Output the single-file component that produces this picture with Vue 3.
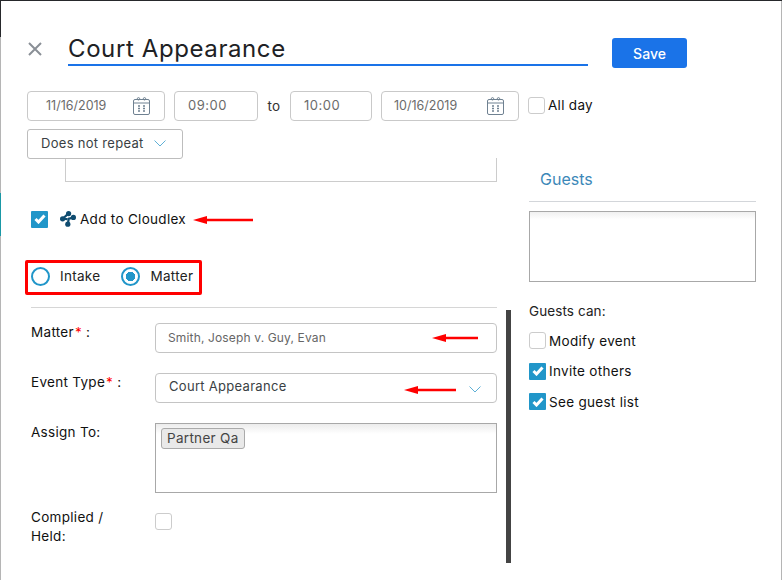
<template>
  <div class="modal">
    <span class="edge edge-left"></span>
    <span class="edge edge-dark"></span>
    <span class="edge edge-teal"></span>
    <span class="edge edge-right"></span>

    <header class="head">
      <button class="close" aria-label="Close">
        <svg width="14" height="14" viewBox="0 0 14 14"><path d="M1 1l12 12M13 1L1 13" stroke="#8a8f96" stroke-width="2" fill="none" /></svg>
      </button>
      <input class="title" type="text" v-model="title">
      <button class="save">Save</button>
    </header>

    <div class="when">
      <div class="field date">
        <span class="date-text">11/16/2019</span>
        <span class="cal">
          <svg width="17" height="18" viewBox="0 0 17 18" fill="none" stroke="#6f8191"><rect x="0.5" y="2.5" width="16" height="15" rx="1.5" /><path d="M1 6h15" /><circle cx="5.5" cy="1.8" r="1.2" /><circle cx="11.5" cy="1.8" r="1.2" /><path d="M5 9h2M10 9h2M5 11.5h2M10 11.5h2M5 14h2M10 14h2" stroke-width="1.4" /></svg>
        </span>
      </div>
      <div class="field time t1">09:00</div>
      <span class="to">to</span>
      <div class="field time t2">10:00</div>
      <div class="field date second">
        <span class="date-text">10/16/2019</span>
        <span class="cal">
          <svg width="17" height="18" viewBox="0 0 17 18" fill="none" stroke="#6f8191"><rect x="0.5" y="2.5" width="16" height="15" rx="1.5" /><path d="M1 6h15" /><circle cx="5.5" cy="1.8" r="1.2" /><circle cx="11.5" cy="1.8" r="1.2" /><path d="M5 9h2M10 9h2M5 11.5h2M10 11.5h2M5 14h2M10 14h2" stroke-width="1.4" /></svg>
        </span>
      </div>
      <label class="check allday"><span class="box"></span>All day</label>
    </div>

    <div class="repeat">
      <span>Does not repeat</span>
      <svg class="chev" width="12" height="7" viewBox="0 0 12 7"><path d="M0.5 0.5L6 6l5.5-5.5" stroke="#5fb0d6" fill="none" /></svg>
    </div>

    <div class="columns">
      <section class="left">
        <div class="desc"></div>

        <div class="cloudlex">
          <span class="box on"><svg width="12" height="10" viewBox="0 0 12 10"><path d="M1.5 5l3 3 6-6.5" stroke="#fff" stroke-width="3" fill="none" /></svg></span>
          <svg class="logo" width="16" height="16" viewBox="0 0 16 16" fill="#0f4c70">
            <circle cx="8.6" cy="2.6" r="2.6" />
            <circle cx="2.6" cy="7.8" r="2.6" />
            <circle cx="13.4" cy="6.4" r="2.6" />
            <circle cx="7.8" cy="13.2" r="2.6" />
            <path d="M8.6 2.4L2.8 7.6 7.4 8.2M13.4 6.6L8.8 7.6 7.8 13.2" stroke="#0f4c70" stroke-width="2.2" fill="none" />
          </svg>
          <span class="cloudlex-text">Add to Cloudlex</span>
          <svg class="arrow arrow-a" width="60" height="10" viewBox="0 0 60 10"><path d="M60 3.8H14V1L0 5l14 4V6.2h46z" fill="#f00" /></svg>
        </div>

        <div class="radios">
          <label class="radio"><span class="dot"></span>Intake</label>
          <label class="radio"><span class="dot on"></span>Matter</label>
        </div>

        <div class="rows">
          <div class="row">
            <span class="lbl">Matter<i>*</i> :</span>
            <div class="ctl input-like matter">Smith, Joseph v. Guy, Evan
              <svg class="arrow arrow-b" width="46" height="10" viewBox="0 0 46 10"><path d="M46 3.8H14V1L0 5l14 4V6.2h32z" fill="#f00" /></svg>
            </div>
          </div>
          <div class="row">
            <span class="lbl">Event Type<i>*</i> :</span>
            <div class="ctl input-like etype">Court Appearance
              <svg class="arrow arrow-c" width="52" height="10" viewBox="0 0 52 10"><path d="M52 3.8H14V1L0 5l14 4V6.2h38z" fill="#f00" /></svg>
              <svg class="chev" width="12" height="7" viewBox="0 0 12 7"><path d="M0.5 0.5L6 6l5.5-5.5" stroke="#5fb0d6" fill="none" /></svg>
            </div>
          </div>
          <div class="row">
            <span class="lbl">Assign To:</span>
            <div class="ctl assign"><span class="chip">Partner Qa</span></div>
          </div>
          <div class="row held">
            <span class="lbl">Complied /<br>Held:</span>
            <span class="box"></span>
          </div>
        </div>
      </section>

      <aside class="right">
        <h3 class="guests">Guests</h3>
        <div class="guest-box"></div>
        <p class="can">Guests can:</p>
        <label v-for="o in options" :key="o.text" class="check opt">
          <span class="box" :class="{ on: o.on }">
            <svg v-if="o.on" width="12" height="10" viewBox="0 0 12 10"><path d="M1.5 5l3 3 6-6.5" stroke="#fff" stroke-width="3" fill="none" /></svg>
          </span>
          {{ o.text }}
        </label>
      </aside>
    </div>

    <span class="scrollbar"></span>
  </div>
</template>

<script setup>
import { ref } from 'vue'

const title = ref('Court Appearance')
const options = [
  { text: 'Modify event', on: false },
  { text: 'Invite others', on: true },
  { text: 'See guest list', on: true },
]
</script>

<style>
html, body { margin: 0; background: #fff; }
</style>

<style scoped>
.modal {
  position: relative;
  width: 782px;
  height: 580px;
  box-sizing: border-box;
  overflow: hidden;
  padding: 37px 0 0 27px;
  background: #fff;
  border-top: 1px solid #26282b;
  font-family: Inter, "Noto Sans", sans-serif;
  font-size: 13.5px;
  letter-spacing: 0.3px;
  color: #111;
}
.edge { position: absolute; width: 1px; }
.edge-left { left: 0; top: 0; bottom: 0; background: #b5b5b5; }
.edge-dark { left: 0; top: 0; height: 36px; background: #26282b; }
.edge-teal { left: 0; top: 192px; height: 43px; background: #1a98a6; }
.edge-right { right: 0; top: 0; bottom: 0; background: #b5b5b5; }

.head { display: flex; align-items: flex-start; }
.close { display: flex; align-items: flex-start; width: 41px; height: 30px; padding: 4px 0 0 1px; border: 0; background: none; }
.title {
  width: 520px;
  height: 20px;
  box-sizing: content-box;
  padding: 0 0 6px;
  border: 0;
  border-bottom: 2px solid #1a73e8;
  outline: 0;
  font: 400 24px Inter, sans-serif;
  letter-spacing: 0.6px;
  color: #202124;
}
.save {
  width: 75px;
  height: 30px;
  margin-left: 24px;
  border: 0;
  border-radius: 3px;
  background: #1a73e8;
  color: #fff;
  font: 500 14px Inter, sans-serif;
}

.when { display: flex; align-items: center; height: 30px; margin-top: 23px; }
.field {
  height: 30px;
  box-sizing: border-box;
  border: 1px solid #c9c9c9;
  border-radius: 4px;
  color: #6b6b6b;
  line-height: 27px;
}
.date { width: 138px; display: flex; justify-content: space-between; }
.date-text { padding-left: 18px; font-size: 12.5px; letter-spacing: 0; }
.second .date-text { padding-left: 12px; }
.cal { display: flex; align-items: center; padding-right: 14px; }
.time { padding-left: 13px; font-size: 13px; letter-spacing: 0.5px; }
.t1 { width: 84px; margin: 0 0 0 9px; }
.to { width: 32px; text-align: center; color: #333; }
.t2 { width: 82px; margin-right: 9px; }
.allday { margin: -2px 0 0 9px; gap: 4px; }

.check { display: flex; align-items: center; gap: 3px; color: #111; }
.box {
  flex: none;
  display: flex;
  align-items: center;
  justify-content: center;
  width: 17px;
  height: 17px;
  box-sizing: border-box;
  border: 1px solid #ccc;
  border-radius: 3px;
  background: #fff;
}
.box.on { border: 0; border-radius: 1px; background: #2196c9; }

.repeat {
  display: flex;
  align-items: center;
  justify-content: space-between;
  width: 156px;
  height: 30px;
  box-sizing: border-box;
  margin-top: 8px;
  padding: 0 16px 2px 13px;
  border: 1px solid #bdbdbd;
  border-radius: 3px;
  background: #fff;
  color: #3a3f44;
  font-size: 13px;
  position: relative;
  z-index: 1;
}

.columns { display: flex; margin-top: -1px; }
.left { width: 466px; margin-left: 4px; }
.desc { width: 432px; height: 24px; box-sizing: border-box; margin-left: 34px; border: 1px solid #ccc; border-top: 0; }

.cloudlex { position: relative; display: flex; align-items: center; height: 16px; margin-top: 29px; }
.logo { margin-left: 12px; }
.cloudlex-text { margin-left: 4px; }
.arrow { position: absolute; }
.arrow-a { left: 162px; top: 4px; }

.radios {
  display: flex;
  align-items: center;
  gap: 21px;
  width: 177px;
  height: 35px;
  box-sizing: border-box;
  margin: 33px 0 0 -6px;
  padding: 0 0 3px 3px;
  border: 3px solid #f00;
  border-radius: 2px;
}
.radio { display: flex; align-items: center; gap: 10px; color: #222; }
.dot { width: 19px; height: 19px; box-sizing: border-box; border: 2px solid #2196c9; border-radius: 50%; background: #fff; }
.dot.on { background: radial-gradient(circle, #2196c9 4.5px, #fff 5px); }

.rows { margin-top: 12px; padding-top: 15px; border-top: 1px solid #d6d6d6; }
.row { display: flex; align-items: flex-start; margin-bottom: 20px; }
.lbl { width: 124px; line-height: 19px; }
.lbl i { margin-left: 1px; font-style: normal; color: #f00; }
.ctl { position: relative; width: 342px; box-sizing: border-box; }
.input-like { height: 30px; line-height: 28px; border: 1px solid #c4c4c4; border-radius: 4px; }
.matter { padding-left: 12px; font-size: 12px; letter-spacing: 0.15px; color: #666; }
.etype { padding-left: 13px; font-size: 13px; line-height: 25px; color: #3a3f44; }
.etype .chev { position: absolute; right: 15px; top: 12px; }
.arrow-b { left: 276px; top: 9px; }
.arrow-c { left: 248px; top: 11px; }
.assign {
  height: 70px;
  padding: 4px 5px;
  border: 1px solid #a8a8a8;
  background: linear-gradient(#ececec, #fff 10px);
}
.chip {
  display: inline-block;
  height: 21px;
  box-sizing: border-box;
  padding: 0 5px;
  border: 1px solid #aaa;
  border-radius: 3px;
  background: #e9e9e9;
  line-height: 19px;
  color: #444;
}
.held { margin-top: 0; }
.held .lbl { margin-top: -5px; }

.right { width: 227px; margin-left: 32px; }
.guests {
  height: 44px;
  box-sizing: border-box;
  margin: 0;
  padding: 11px 0 0 11px;
  border-bottom: 1px solid #d3d6da;
  font-size: 16px;
  font-weight: 400;
  letter-spacing: 0;
  color: #3c88b8;
}
.guest-box { height: 71px; box-sizing: border-box; margin-top: 9px; border: 1px solid #a8a8a8; background: linear-gradient(#f0f0f0, #fff 8px); }
.can { margin: 20px 0 12px; line-height: 18px; letter-spacing: 0.1px; color: #222; }
.opt { height: 17px; margin-bottom: 13.5px; }

.scrollbar { position: absolute; left: 506px; top: 309px; width: 5px; height: 253px; background: #444; }
</style>
